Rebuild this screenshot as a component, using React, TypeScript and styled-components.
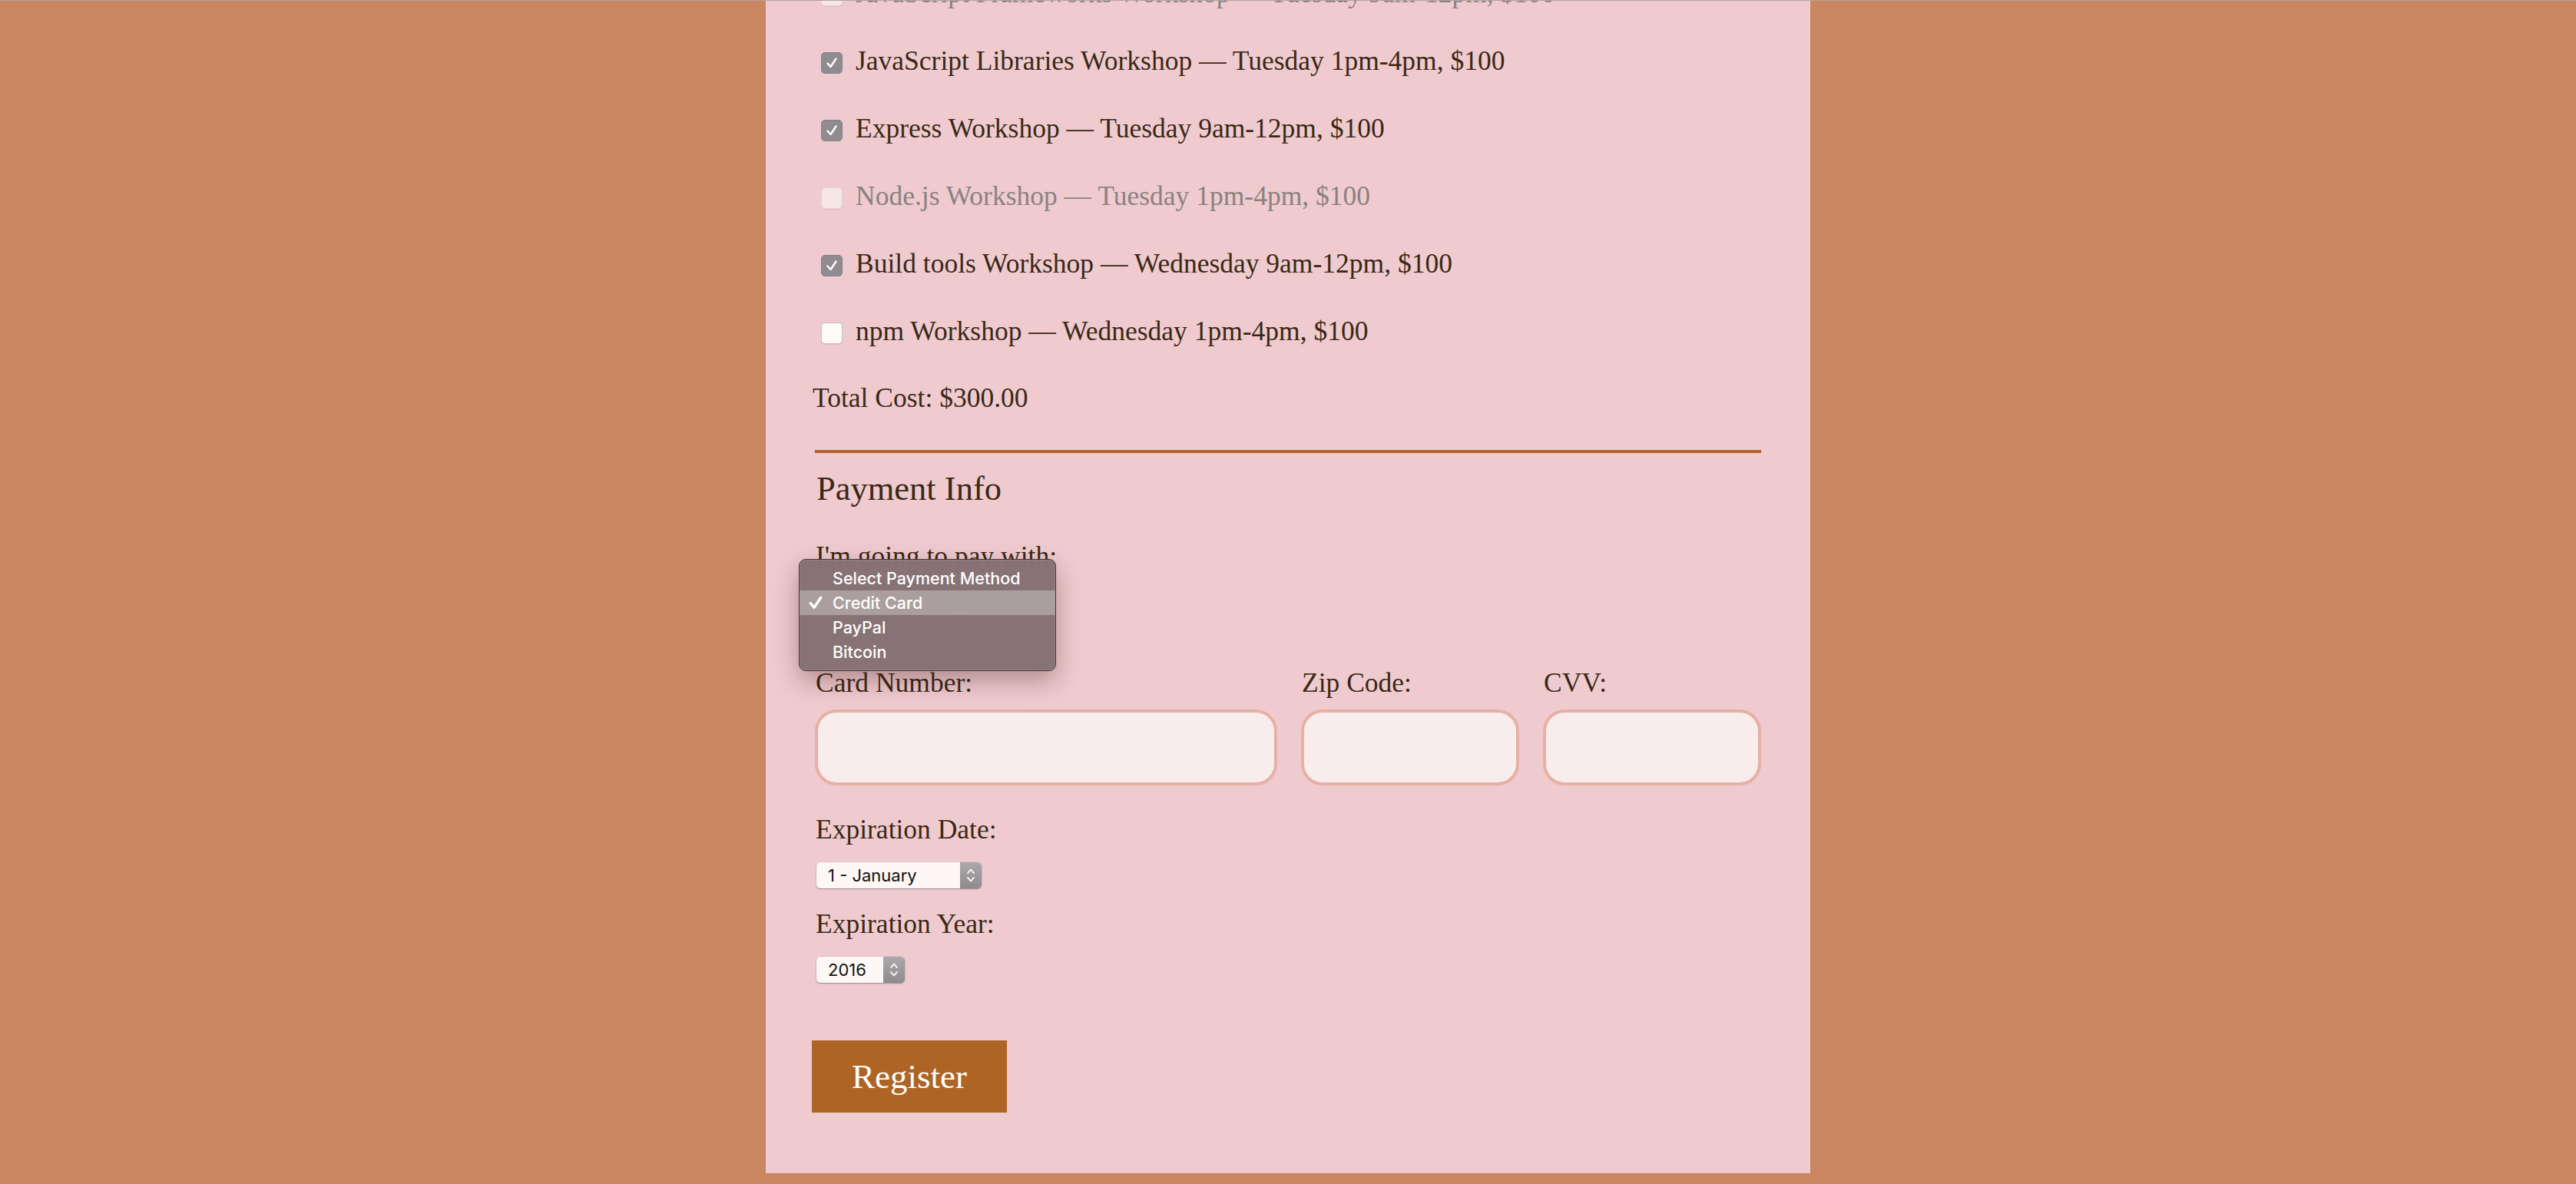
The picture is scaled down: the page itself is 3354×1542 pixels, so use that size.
import React from 'react';
import styled, { createGlobalStyle } from 'styled-components';

const GlobalStyle = createGlobalStyle`
  html, body {
    margin: 0;
    padding: 0;
    background: #c98660;
    overflow: hidden;
  }
  * { box-sizing: border-box; }
`;

const Page = styled.div`
  position: relative;
  min-height: 100vh;
  display: flex;
  justify-content: center;
  font-family: "Liberation Serif", "Times New Roman", serif;
  color: #3a2816;
  &::before {
    content: '';
    position: absolute;
    left: 0;
    right: 0;
    top: 0;
    height: 1px;
    background: #b3a19d;
    z-index: 5;
  }
`;

const Panel = styled.form`
  width: 1360px;
  height: 1528px;
  background: #efcbcf;
  padding: 0 64px;
  overflow: hidden;
  display: flex;
  flex-direction: column;
`;

const ActivityList = styled.div`
  margin-top: -53px;
  display: flex;
  flex-direction: column;
`;

const ActivityRow = styled.label<{ $disabled?: boolean }>`
  height: 88px;
  display: flex;
  align-items: center;
  gap: 17px;
  padding-left: 8px;
  font-size: 35.5px;
  line-height: 40px;
  white-space: nowrap;
  color: ${p => (p.$disabled ? '#8b8180' : '#3a2816')};
`;

type BoxState = 'checked' | 'unchecked' | 'disabled';

const Box = styled.span<{ $state: BoxState }>`
  width: 28px;
  height: 28px;
  flex: none;
  margin-top: 6px;
  border-radius: 5px;
  display: flex;
  align-items: center;
  justify-content: center;
  background: ${p =>
    p.$state === 'checked' ? '#8f8b8f' : p.$state === 'disabled' ? '#f6e6e7' : '#fdfaf8'};
  border: 1px solid
    ${p => (p.$state === 'checked' ? '#86828a' : p.$state === 'disabled' ? '#e6d2d4' : '#cbbfbf')};
  box-shadow: ${p => (p.$state === 'checked' ? 'none' : '0 1px 1px rgba(0,0,0,0.08)')};
`;

const TotalCost = styled.p`
  margin: 23px 0 0 -3px;
  font-size: 35.5px;
  line-height: 40px;
`;

const Rule = styled.hr`
  margin: 48px 0 0;
  border: none;
  height: 4px;
  background: #b0652a;
`;

const SectionTitle = styled.h2`
  margin: 21px 0 0 2px;
  font-weight: 400;
  font-size: 44.5px;
  line-height: 50px;
`;

const PayBlock = styled.div`
  position: relative;
  margin-top: 43px;
  display: flex;
  flex-direction: column;
  align-items: flex-start;
`;

const Label = styled.label<{ $top?: number }>`
  display: block;
  margin: ${p => p.$top ?? 0}px 0 0 1px;
  font-size: 35.5px;
  line-height: 40px;
  white-space: nowrap;
`;

const SelectBox = styled.div<{ $width: number; $top?: number }>`
  width: ${p => p.$width}px;
  height: 34px;
  margin: ${p => p.$top ?? 0}px 0 0 2px;
  display: flex;
  border-radius: 5px;
  background: #fdf8f6;
  box-shadow: 0 1px 1.5px rgba(0, 0, 0, 0.3), 0 0 0 0.5px rgba(0, 0, 0, 0.12);
  overflow: hidden;
  font-family: Inter, "Liberation Sans", sans-serif;
  font-size: 22px;
  color: #111;
`;

const SelectValue = styled.span`
  flex: 1;
  display: flex;
  align-items: center;
  padding-left: 15px;
  white-space: nowrap;
`;

const Stepper = styled.span`
  width: 28px;
  flex: none;
  display: flex;
  align-items: center;
  justify-content: center;
  background: linear-gradient(#ada9ab, #8f8b8d);
`;

const Menu = styled.ul`
  position: absolute;
  left: -21px;
  top: 24px;
  width: 335px;
  margin: 0;
  padding: 8px 0;
  list-style: none;
  background: rgba(133, 113, 116, 0.98);
  border: 1px solid #3e3536;
  border-radius: 9px;
  box-shadow: inset 0 0 0 1px rgba(255, 255, 255, 0.12), 0 12px 32px rgba(60, 20, 20, 0.35);
  font-family: Inter, "Liberation Sans", sans-serif;
  font-weight: 500;
  font-size: 21.5px;
  color: #ffffff;
  z-index: 10;
`;

const MenuItem = styled.li<{ $active?: boolean }>`
  position: relative;
  height: 32px;
  display: flex;
  align-items: center;
  padding-left: 43px;
  background: ${p => (p.$active ? 'rgba(173, 160, 161, 0.95)' : 'transparent')};
`;

const CheckMark = styled.span`
  position: absolute;
  left: 10px;
  top: 5px;
  display: flex;
`;

const CardGrid = styled.div`
  margin-top: 67px;
  display: grid;
  grid-template-columns: 602px 284px 1fr;
  column-gap: 31px;
  row-gap: 15px;
`;

const TextInput = styled.input`
  height: 99px;
  width: 100%;
  border: 4px solid #e8b0a4;
  border-radius: 28px;
  background: #f8ecec;
  outline: none;
  font-family: inherit;
  font-size: 32px;
  padding: 0 20px;
`;

const RegisterButton = styled.button`
  margin: 75px 0 0 -4px;
  width: 254px;
  height: 94px;
  border: none;
  background: #ad6424;
  color: #ffffff;
  font-family: "Liberation Serif", "Times New Roman", serif;
  font-size: 45px;
  cursor: pointer;
`;

const Tick = ({ size = 18, weight = 2.4 }: { size?: number; weight?: number }) => (
  <svg width={size} height={size} viewBox="0 0 18 18" fill="none">
    <path d="M3.5 9.5 L7.5 14 L14.5 3.5" stroke="#fff" strokeWidth={weight} strokeLinecap="round" strokeLinejoin="round" />
  </svg>
);

const Chevrons = () => (
  <svg width="14" height="24" viewBox="0 0 14 24" fill="none">
    <path d="M3 9 L7 4.5 L11 9" stroke="#fff" strokeWidth="1.8" strokeLinecap="round" strokeLinejoin="round" />
    <path d="M3 15 L7 19.5 L11 15" stroke="#fff" strokeWidth="1.8" strokeLinecap="round" strokeLinejoin="round" />
  </svg>
);

const activities: { label: string; state: BoxState }[] = [
  { label: 'JavaScript Frameworks Workshop — Tuesday 9am-12pm, $100', state: 'disabled' },
  { label: 'JavaScript Libraries Workshop — Tuesday 1pm-4pm, $100', state: 'checked' },
  { label: 'Express Workshop — Tuesday 9am-12pm, $100', state: 'checked' },
  { label: 'Node.js Workshop — Tuesday 1pm-4pm, $100', state: 'disabled' },
  { label: 'Build tools Workshop — Wednesday 9am-12pm, $100', state: 'checked' },
  { label: 'npm Workshop — Wednesday 1pm-4pm, $100', state: 'unchecked' },
];

const paymentOptions = ['Select Payment Method', 'Credit Card', 'PayPal', 'Bitcoin'];

const Select = ({ value, width, top }: { value: string; width: number; top?: number }) => (
  <SelectBox $width={width} $top={top}>
    <SelectValue>{value}</SelectValue>
    <Stepper>
      <Chevrons />
    </Stepper>
  </SelectBox>
);

export default function App() {
  return (
    <>
      <GlobalStyle />
      <Page>
        <Panel onSubmit={e => e.preventDefault()}>
          <ActivityList>
            {activities.map(a => (
              <ActivityRow key={a.label} $disabled={a.state === 'disabled'}>
                <Box $state={a.state}>{a.state === 'checked' && <Tick />}</Box>
                {a.label}
              </ActivityRow>
            ))}
          </ActivityList>
          <TotalCost>Total Cost: $300.00</TotalCost>
          <Rule />
          <SectionTitle>Payment Info</SectionTitle>
          <PayBlock>
            <Label>I'm going to pay with:</Label>
            <Select value="Credit Card" width={200} top={24} />
            <Menu>
              {paymentOptions.map(o => (
                <MenuItem key={o} $active={o === 'Credit Card'}>
                  {o === 'Credit Card' && (
                    <CheckMark>
                      <Tick size={22} weight={2.8} />
                    </CheckMark>
                  )}
                  {o}
                </MenuItem>
              ))}
            </Menu>
          </PayBlock>
          <CardGrid>
            <Label>Card Number:</Label>
            <Label>Zip Code:</Label>
            <Label>CVV:</Label>
            <TextInput type="text" />
            <TextInput type="text" />
            <TextInput type="text" />
          </CardGrid>
          <Label $top={37}>Expiration Date:</Label>
          <Select value="1 - January" width={215} top={23} />
          <Label $top={26}>Expiration Year:</Label>
          <Select value="2016" width={115} top={23} />
          <div>
            <RegisterButton type="submit">Register</RegisterButton>
          </div>
        </Panel>
      </Page>
    </>
  );
}
